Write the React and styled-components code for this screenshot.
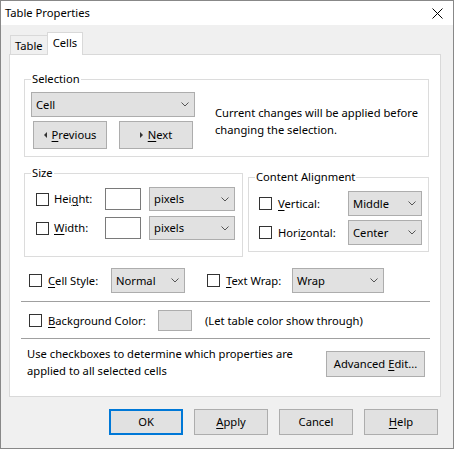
import React from 'react';
import styled, { createGlobalStyle } from 'styled-components';

const Global = createGlobalStyle`
  html, body { margin: 0; padding: 0; background: #fff; }
  * { box-sizing: border-box; }
  body {
    font-family: "Noto Sans", "Segoe UI", sans-serif;
    font-size: 11.2px;
    line-height: 16px;
    color: #000;
  }
`;

const Window = styled.div`
  width: 454px;
  height: 449px;
  border: 1px solid #888;
  background: #f0f0f0;
  display: flex;
  flex-direction: column;
`;

const TitleBar = styled.div`
  height: 24px;
  background: #fff;
  display: flex;
  align-items: center;
  justify-content: space-between;
  padding: 0 10px 0 4px;
`;

const Body = styled.div`
  padding: 8px 11px 0 8px;
  display: flex;
  flex-direction: column;
`;

const TabRow = styled.div`
  height: 21px;
  display: flex;
  align-items: flex-end;
  padding-left: 1px;
`;

const Tab = styled.div`
  height: ${p => (p.$active ? 23 : 19)}px;
  margin-bottom: ${p => (p.$active ? -1 : 0)}px;
  padding: 0 ${p => (p.$active ? 5 : 4)}px;
  background: ${p => (p.$active ? '#fff' : '#f0f0f0')};
  border: 1px solid #d9d9d9;
  border-bottom: none;
  margin-left: ${p => (p.$active ? -1 : 0)}px;
  position: relative;
  z-index: ${p => (p.$active ? 2 : 1)};
  display: flex;
  align-items: ${p => (p.$active ? 'flex-start' : 'center')};
  padding-top: ${p => (p.$active ? 1 : 0)}px;
  line-height: 17px;
`;

const Panel = styled.div`
  width: 432px;
  height: 343px;
  background: #fff;
  border: 1px solid #d9d9d9;
  padding-top: 16px;
  display: flex;
  flex-direction: column;
`;

const Group = styled.fieldset`
  margin: 0;
  min-width: 0;
  border: 1px solid #dcdcdc;
  width: ${p => p.$w}px;
  padding: 0;
  margin-top: ${p => p.$mt || 0}px;
  margin-left: ${p => p.$ml || 0}px;
`;

const Legend = styled.legend`
  padding: 0 1px;
  margin-left: 6px;
  line-height: 16px;
`;

const GroupBody = styled.div`
  padding: ${p => p.$pad};
`;

const SelectionBody = styled.div`
  display: flex;
  align-items: center;
  gap: 20px;
`;

const Column = styled.div`
  display: flex;
  flex-direction: column;
  gap: ${p => p.$gap || 0}px;
`;

const Row = styled.div`
  display: flex;
  align-items: center;
  gap: ${p => p.$gap || 0}px;
  margin-left: ${p => p.$ml || 0}px;
  margin-top: ${p => p.$mt || 0}px;
  height: ${p => (p.$h ? `${p.$h}px` : 'auto')};
`;

const Note = styled.div`
  line-height: 17px;
`;

const Button = styled.div`
  width: ${p => p.$w}px;
  height: ${p => p.$h || 26}px;
  background: #e1e1e1;
  border: ${p => (p.$default ? '2px solid #0078d7' : '1px solid #adadad')};
  display: flex;
  align-items: center;
  justify-content: center;
  gap: 5px;
  flex-shrink: 0;
  margin-top: ${p => p.$mt || 0}px;
`;

const Combo = styled.div`
  width: ${p => p.$w}px;
  height: ${p => p.$h || 25}px;
  background: #e1e1e1;
  border: 1px solid #adadad;
  display: flex;
  align-items: center;
  justify-content: space-between;
  padding: 0 5px 0 4px;
  flex-shrink: 0;
`;

const TextBox = styled.div`
  width: 36px;
  height: 22px;
  background: #fff;
  border: 1px solid #7a7a7a;
`;

const ColorBox = styled.div`
  width: 34px;
  height: 21px;
  background: #e1e1e1;
  border: 1px solid #adadad;
  flex-shrink: 0;
`;

const Check = styled.label`
  display: flex;
  align-items: center;
  gap: ${p => p.$gap || 6}px;
  width: ${p => p.$w}px;
  flex-shrink: 0;
`;

const Box = styled.span`
  width: 13px;
  height: 13px;
  border: 1px solid #333;
  background: #fff;
  flex-shrink: 0;
`;

const GroupsRow = styled.div`
  display: flex;
  align-items: flex-start;
  gap: 5px;
  margin: 8px 0 0 14px;
`;

const Grid = styled.div`
  display: grid;
  grid-template-columns: ${p => p.$cols};
  row-gap: ${p => p.$rg}px;
  align-items: center;
`;

const Spacer = styled.span`
  width: ${p => p.$w}px;
  flex-shrink: 0;
`;

const Separator = styled.div`
  height: 1px;
  background: #a0a0a0;
  margin: ${p => p.$mt}px 10px 0 11px;
`;

const Footer = styled.div`
  display: flex;
  justify-content: space-between;
  align-items: flex-start;
  margin: 6px 15px 0 17px;
`;

const ButtonBar = styled.div`
  display: flex;
  justify-content: flex-end;
  gap: 11px;
  margin: 12px 4px 0 0;
`;

const U = styled.span`
  text-decoration: underline;
  text-underline-offset: 2px;
`;

const Chevron = () => (
  <svg width="8" height="5" viewBox="0 0 8 5">
    <polyline points="0.5,0.5 4,4 7.5,0.5" fill="none" stroke="#555" strokeWidth="1" />
  </svg>
);

const Tri = ({ dir }) => (
  <svg width="3" height="6" viewBox="0 0 3 6">
    {dir === 'left' ? <polygon points="3,0 0,3 3,6" fill="#333" /> : <polygon points="0,0 3,3 0,6" fill="#333" />}
  </svg>
);

const CloseIcon = () => (
  <svg width="11" height="11" viewBox="0 0 11 11">
    <path d="M0.5 0.5 L10.5 10.5 M10.5 0.5 L0.5 10.5" stroke="#000" strokeWidth="1" />
  </svg>
);

const Select = ({ w, h, children }) => (
  <Combo $w={w} $h={h}>
    <span>{children}</span>
    <Chevron />
  </Combo>
);

const CheckItem = ({ w, gap, children }) => (
  <Check $w={w} $gap={gap}>
    <Box />
    <span>{children}</span>
  </Check>
);

export default function App() {
  return (
    <>
      <Global />
      <Window>
        <TitleBar>
          <span>Table Properties</span>
          <CloseIcon />
        </TitleBar>
        <Body>
          <TabRow>
            <Tab>Table</Tab>
            <Tab $active>Cells</Tab>
          </TabRow>
          <Panel>
            <Group $w={405} $ml={14}>
              <Legend>Selection</Legend>
              <GroupBody $pad="5px 6px 7px 6px">
                <SelectionBody>
                  <Column $gap={4}>
                    <Select w={164}>Cell</Select>
                    <Row $gap={12} $ml={2}>
                      <Button $w={74} $h={28}>
                        <Tri dir="left" />
                        <span><U>P</U>revious</span>
                      </Button>
                      <Button $w={74} $h={28}>
                        <Tri dir="right" />
                        <span><U>N</U>ext</span>
                      </Button>
                    </Row>
                  </Column>
                  <Note>
                    Current changes will be applied before
                    <br />
                    changing the selection.
                  </Note>
                </SelectionBody>
              </GroupBody>
            </Group>

            <GroupsRow>
              <Group $w={219}>
                <Legend>Size</Legend>
                <GroupBody $pad="6px 7px 16px 11px">
                  <Grid $cols="69px 44px 86px" $rg={5}>
                    <CheckItem w={69} gap={5}>Hei<U>g</U>ht:</CheckItem>
                    <TextBox />
                    <Select w={86} h={24}>pixels</Select>
                    <CheckItem w={69} gap={5}><U>W</U>idth:</CheckItem>
                    <TextBox />
                    <Select w={86} h={24}>pixels</Select>
                  </Grid>
                </GroupBody>
              </Group>
              <Group $w={181} $mt={4}>
                <Legend>Content Alignment</Legend>
                <GroupBody $pad="6px 6px 6px 10px">
                  <Grid $cols="89px 74px" $rg={4}>
                    <CheckItem w={89}><U>V</U>ertical:</CheckItem>
                    <Select w={74}>Middle</Select>
                    <CheckItem w={89}>Hori<U>z</U>ontal:</CheckItem>
                    <Select w={74}>Center</Select>
                  </Grid>
                </GroupBody>
              </Group>
            </GroupsRow>

            <Row $ml={19} $mt={11} $h={25}>
              <CheckItem w={82}><U>C</U>ell Style:</CheckItem>
              <Select w={74}>Normal</Select>
              <Spacer $w={22} />
              <CheckItem w={85}><U>T</U>ext Wrap:</CheckItem>
              <Select w={92}>Wrap</Select>
            </Row>

            <Separator $mt={8} />

            <Row $ml={19} $mt={8} $h={21} $gap={13}>
              <Row>
                <CheckItem w={129}><U>B</U>ackground Color:</CheckItem>
                <ColorBox />
              </Row>
              <span>(Let table color show through)</span>
            </Row>

            <Separator $mt={7} />

            <Footer>
              <Note>
                Use checkboxes to determine which properties are
                <br />
                applied to all selected cells
              </Note>
              <Button $w={99} $mt={6}>
                <span>Advanced <U>E</U>dit...</span>
              </Button>
            </Footer>
          </Panel>
          <ButtonBar>
            <Button $w={74} $default>OK</Button>
            <Button $w={74}><span><U>A</U>pply</span></Button>
            <Button $w={74}>Cancel</Button>
            <Button $w={74}><span><U>H</U>elp</span></Button>
          </ButtonBar>
        </Body>
      </Window>
    </>
  );
}
